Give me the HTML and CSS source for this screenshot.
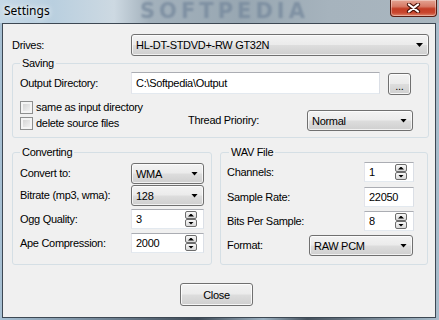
FILE: index.html
```html
<!DOCTYPE html>
<html lang="en">
<head>
  <meta charset="UTF-8">
  <title>Settings</title>
  <link rel="stylesheet" href="styles.css">
</head>
<body>
  <div class="titlebar">
    <span class="title">Settings</span>
    <span class="watermark">SOFTPEDIA</span>
    <div class="close-x">
      <svg width="15" height="10" viewBox="0 0 15 10">
        <path d="M3 1.5 L12 8.5 M12 1.5 L3 8.5" stroke="#4a1208" stroke-width="4.2" stroke-linecap="round"/>
        <path d="M3 1.5 L12 8.5 M12 1.5 L3 8.5" stroke="#fff" stroke-width="2.2" stroke-linecap="round"/>
      </svg>
    </div>
  </div>

  <div class="client">
    <div class="row">
      <span class="lbl lbl-drives">Drives:</span>
      <div class="combo combo-drives"><span>HL-DT-STDVD+-RW GT32N</span><i class="arrow"></i></div>
    </div>

    <fieldset class="group saving">
      <legend>Saving</legend>
      <div class="row out-row">
        <span class="lbl lbl-out">Output Directory:</span>
        <div class="edit out-edit">C:\Softpedia\Output</div>
        <div class="btn browse">...</div>
      </div>
      <div class="saving-bottom">
        <div class="checks">
          <div class="check"><span class="box"></span>same as input directory</div>
          <div class="check"><span class="box"></span>delete source files</div>
        </div>
        <div class="row prio">
          <span class="lbl lbl-prio">Thread Prioriry:</span>
          <div class="combo combo-prio"><span>Normal</span><i class="arrow"></i></div>
        </div>
      </div>
    </fieldset>

    <div class="groups">
      <fieldset class="group conv">
        <legend>Converting</legend>
        <div class="field first">
          <span class="lbl">Convert to:</span>
          <div class="combo ctl"><span>WMA</span><i class="arrow"></i></div>
        </div>
        <div class="field gap1">
          <span class="lbl">Bitrate (mp3, wma):</span>
          <div class="combo ctl"><span>128</span><i class="arrow"></i></div>
        </div>
        <div class="field gap3">
          <span class="lbl">Ogg Quality:</span>
          <div class="edit ctl spinbox"><span>3</span><span class="spin"><i class="up"></i><i class="down"></i></span></div>
        </div>
        <div class="field gap4">
          <span class="lbl">Ape Compression:</span>
          <div class="edit ctl spinbox"><span>2000</span><span class="spin"><i class="up"></i><i class="down"></i></span></div>
        </div>
      </fieldset>

      <fieldset class="group wav">
        <legend>WAV File</legend>
        <div class="field">
          <span class="lbl">Channels:</span>
          <div class="edit num spinbox"><span>1</span><span class="spin"><i class="up"></i><i class="down"></i></span></div>
        </div>
        <div class="field gap5">
          <span class="lbl">Sample Rate:</span>
          <div class="edit num"><span>22050</span></div>
        </div>
        <div class="field gap4">
          <span class="lbl">Bits Per Sample:</span>
          <div class="edit num spinbox"><span>8</span><span class="spin"><i class="up"></i><i class="down"></i></span></div>
        </div>
        <div class="field gap4">
          <span class="lbl">Format:</span>
          <div class="combo combo-format"><span>RAW PCM</span><i class="arrow"></i></div>
        </div>
      </fieldset>
    </div>

    <div class="actions">
      <div class="btn close">Close</div>
    </div>
  </div>
</body>
</html>
```

FILE: styles.css
```css
* { box-sizing: border-box; }
body { margin: 0; width: 439px; height: 320px; overflow: hidden; background: linear-gradient(90deg, #a7c0d3 0%, #6f8293 25%, #3e4a56 45%, #9db2c2 60%, #46525e 70%, #a9bdcc 100%); font-family: "Liberation Sans", Arial, sans-serif; font-size: 11px; letter-spacing: -0.3px; color: #000; }

/* title bar */
.titlebar { position: relative; height: 23px; display: flex; align-items: flex-start; background: linear-gradient(90deg, #c6d9e7 0%, #b9cfdf 12%, #cdd9e2 26%, #a3b1bc 34%, #98a7b2 55%, #a6b3bd 75%, #a9b6bf 100%); }
.title { position: relative; z-index: 1; padding: 3px 0 0 4px; font-family: "Noto Sans", sans-serif; font-size: 12px; line-height: 15px; letter-spacing: 0; text-shadow: 0 0 5px #fff, 0 0 8px rgba(255,255,255,0.8); }
.watermark { position: absolute; left: 140px; top: 0; font-family: "DejaVu Sans", sans-serif; font-size: 21px; line-height: 23px; font-weight: bold; letter-spacing: 4px; color: #72859a; opacity: 0.7; filter: blur(1px); }
.close-x { position: relative; z-index: 1; margin-left: auto; margin-right: 2px; width: 47px; height: 17px; display: flex; align-items: center; justify-content: center; border: 1px solid #5b1d12; border-top: none; border-radius: 0 0 4px 4px; background: linear-gradient(#e4a493 0%, #d77a66 40%, #c33d25 55%, #c9472f 80%, #df8a70 100%); box-shadow: inset 0 0 0 1px rgba(255,255,255,0.35); }

/* client area */
.client { margin-left: 2px; width: 434px; height: 295px; border: 1px solid #3d4853; background: #f0f0f0; padding: 10px 0 0 9px; display: flex; flex-direction: column; align-items: flex-start; }
.row { display: flex; align-items: center; }
.lbl { line-height: 13px; white-space: nowrap; }
.lbl-drives { width: 119px; }
.lbl-out { width: 111px; }
.lbl-prio { width: 119px; }

.combo { height: 21px; display: flex; align-items: center; padding-left: 4px; border: 1px solid #707070; border-radius: 3px; background: linear-gradient(#f3f3f3 0%, #ebebeb 48%, #dddddd 52%, #cfcfcf 100%); box-shadow: inset 0 0 0 1px rgba(255,255,255,0.7); }
.arrow { margin-left: auto; margin-right: 5px; width: 7px; height: 4px; background: #000; clip-path: polygon(0 0, 100% 0, 50% 100%); }
.combo-drives { width: 298px; height: 22px; }
.combo-prio { width: 106px; }
.combo-format { width: 104px; margin-right: 1px; }

.edit { height: 22px; display: flex; align-items: center; padding-left: 4px; background: #fff; border: 1px solid; border-color: #abadb3 #dbdfe6 #e3e9ef #e2e3ea; }
.spin { margin-left: auto; margin-right: 6px; display: flex; flex-direction: column; }
.spin i { width: 12px; height: 8px; display: flex; align-items: center; justify-content: center; border: 1px solid #6d6d6d; border-radius: 2px; background: linear-gradient(#f8f8f8, #d9d9d9); }
.spin i::before { content: ""; width: 6px; height: 3px; background: #000; }
.spin .up::before { clip-path: polygon(50% 0, 100% 100%, 0 100%); }
.spin .down::before { clip-path: polygon(0 0, 100% 0, 50% 100%); }

.btn { height: 22px; display: flex; align-items: center; justify-content: center; border: 1px solid #707070; border-radius: 3px; background: linear-gradient(#f3f3f3 0%, #ebebeb 48%, #dddddd 52%, #cfcfcf 100%); box-shadow: inset 0 0 0 1px rgba(255,255,255,0.8); }

/* group boxes */
.group { margin: 0; min-inline-size: 0; border: 1px solid #d5dfe5; border-radius: 3px; }
.group legend { padding: 0 2px; font-size: 11px; line-height: 13px; }

.saving { margin-top: 1px; width: 417px; padding: 2px 0 6px 7px; }
.out-row { align-items: flex-start; }
.out-row .lbl { line-height: 22px; }
.out-edit { width: 249px; }
.browse { width: 23px; margin: 1px 0 0 8px; padding-top: 4px; }

.saving-bottom { margin-top: 4px; display: flex; align-items: flex-end; }
.checks { width: 168px; }
.check { height: 16px; display: flex; align-items: center; }
.box { width: 13px; height: 13px; margin-right: 3px; border: 1px solid #8e8f8f; background: linear-gradient(135deg, #cdcdcd, #f8f8f8); box-shadow: inset 0 0 0 2px #f4f4f4; }

.groups { margin-top: 8px; display: flex; gap: 8px; }
.conv { width: 200px; padding: 4px 7px 11px 7px; }
.wav { width: 208px; padding: 3px 13px 8px 6px; }
.wav legend { margin-left: 2px; }
.field { display: flex; align-items: center; }
.conv .lbl { width: 111px; }
.wav .lbl { flex: 1; }
.ctl { width: 73px; }
.conv .combo { height: 21px; }
.conv .edit { height: 20px; }
.num { width: 50px; height: 20px; }
.wav .combo { height: 21px; }
.gap1 { margin-top: 1px; }
.gap3 { margin-top: 3px; }
.gap4 { margin-top: 4px; }
.gap5 { margin-top: 5px; }

.actions { margin-top: 18px; width: 432px; margin-left: -9px; padding-right: 5px; display: flex; justify-content: center; }
.close { width: 73px; height: 23px; }
```
